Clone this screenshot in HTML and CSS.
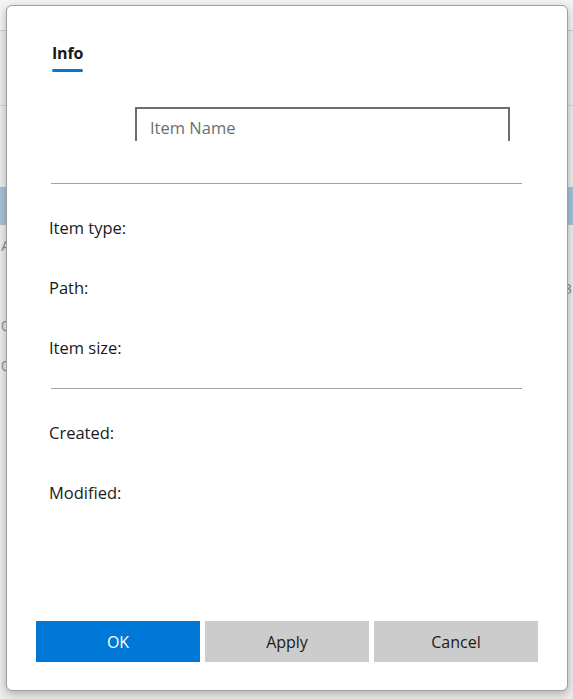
FILE: index.html
```html
<!DOCTYPE html>
<html lang="en">
<head>
<meta charset="utf-8">
<title>Info</title>
<link rel="stylesheet" href="styles.css">
</head>
<body>
<div class="backdrop">
  <div class="bg-head"></div>
  <div class="bg-toolbar"></div>
  <div class="bg-gap"></div>
  <div class="bg-row bg-selected"></div>
  <div class="bg-row bg-r1"><span class="bg-left">AS</span></div>
  <div class="bg-row bg-r2"><span class="bg-right">3</span></div>
  <div class="bg-row bg-r3"><span class="bg-left">0</span></div>
  <div class="bg-row bg-r4"><span class="bg-left">0</span></div>
</div>

<div class="dialog" role="dialog" aria-label="Info">
  <div class="tabs">
    <div class="tab active">Info</div>
  </div>
  <div class="name-field">
    <input class="name-input" type="text" placeholder="Item Name">
  </div>
  <div class="divider"></div>
  <div class="prop prop-first">Item type:</div>
  <div class="prop">Path:</div>
  <div class="prop">Item size:</div>
  <div class="divider divider-2"></div>
  <div class="prop prop-first">Created:</div>
  <div class="prop">Modified:</div>
  <div class="actions">
    <button class="btn btn-primary">OK</button>
    <button class="btn">Apply</button>
    <button class="btn">Cancel</button>
  </div>
</div>
</body>
</html>
```

FILE: styles.css
```css
* { box-sizing: border-box; }

html, body {
  margin: 0;
  padding: 0;
  height: 100%;
}

body {
  background: #ededed;
  font-family: "Open Sans", "Noto Sans", "Liberation Sans", sans-serif;
  color: #1a1a1a;
  overflow: hidden;
  position: relative;
}

/* background app behind the dialog */
.backdrop {
  display: flex;
  flex-direction: column;
}
.bg-head {
  height: 31px;
  background: #f4f4f4;
  border-bottom: 1px solid #cfcfcf;
}
.bg-toolbar {
  height: 75px;
  border-bottom: 1px solid #d4d4d4;
}
.bg-gap { height: 81px; }
.bg-row {
  position: relative;
  font-size: 15px;
  color: #8a8a8a;
  padding-left: 1px;
}
.bg-selected {
  height: 38px;
  background: #a9c2da;
}
.bg-r1 { height: 41px; line-height: 41px; }
.bg-r2 { height: 44px; line-height: 44px; }
.bg-r3 { height: 30px; line-height: 30px; }
.bg-r4 { height: 50px; line-height: 50px; }
.bg-right { position: absolute; right: 1px; top: 0; }

/* dialog */
.dialog {
  position: absolute;
  left: 6px;
  top: 5px;
  width: 562px;
  height: 686px;
  background: #ffffff;
  border: 1px solid #9f9f9f;
  border-radius: 6px;
  box-shadow: 0 3px 10px rgba(0, 0, 0, 0.28);
  display: flex;
  flex-direction: column;
}

.tabs {
  margin-top: 37px;
  padding-left: 45px;
  display: flex;
}
.tab {
  font-size: 16px;
  font-weight: 700;
  line-height: 20px;
  color: #1a1a1a;
  letter-spacing: -0.2px;
}
.tab.active::after {
  content: "";
  display: block;
  height: 3px;
  margin-top: 6px;
  border-radius: 2px;
  background: #0078d7;
}

.name-field {
  margin-top: 35px;
  padding-left: 128px;
}
.name-input {
  display: block;
  width: 375px;
  height: 34px;
  margin: 0;
  padding: 4px 0 0 13px;
  border: 2px solid #6e6e6e;
  border-bottom: none;
  border-radius: 0;
  font: inherit;
  font-size: 16.5px;
  color: #1a1a1a;
  background: #ffffff;
  outline: none;
}
.name-input::placeholder { color: #6e6e6e; }

.divider {
  margin: 42px 45px 0 44px;
  height: 1px;
  background: #a3a3a3;
}
.divider-2 { margin-top: 10px; }

.prop {
  height: 60px;
  line-height: 60px;
  padding-left: 42px;
  font-size: 16.5px;
  color: #1a1a1a;
  flex-shrink: 0;
}
.prop-first { margin-top: 14px; }

.actions {
  margin-top: auto;
  margin-bottom: 28px;
  padding: 0 29px;
  display: grid;
  grid-template-columns: repeat(3, 1fr);
  column-gap: 5px;
}
.btn {
  height: 41px;
  border: none;
  border-radius: 0;
  background: #cccccc;
  color: #1a1a1a;
  font-family: inherit;
  font-size: 16px;
  padding: 0;
}
.btn-primary {
  background: #0078d7;
  color: #ffffff;
}
```
